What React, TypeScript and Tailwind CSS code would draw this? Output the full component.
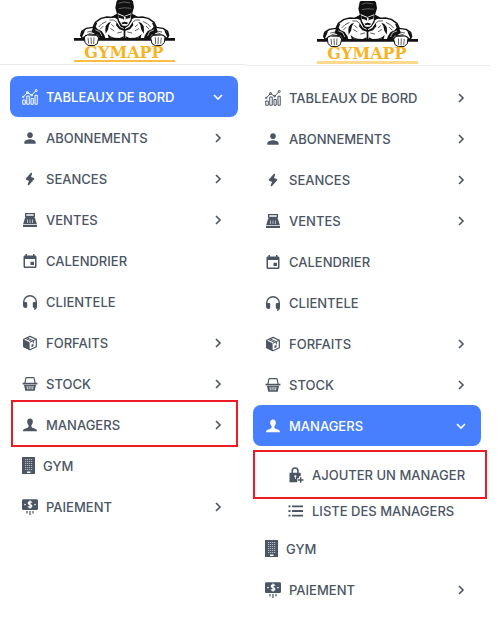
import type { ReactNode } from "react";

type Item = { label: string; icon: ReactNode; expandable?: boolean };

function Icon({ box = "0 0 16 16", narrow = false, children }: { box?: string; narrow?: boolean; children: ReactNode }) {
  return (
    <svg viewBox={box} aria-hidden="true" fill="currentColor" className={narrow ? "h-[17px] w-[13px] shrink-0" : "h-4 w-4 shrink-0"}>
      {children}
    </svg>
  );
}

const chartIcon = (
  <Icon box="0 0 32 32">
    <g fill="none" stroke="currentColor" strokeWidth="2">
      <path d="M1.500 22h5v8.500h-5zM9.500 14h5v16.500h-5zM18 19h4.500v11.500H18zM26 12.500h4.500v18H26z" />
      <path d="M3 15.500l8-8.500 8.500 5.500 8-9" />
      <circle cx="2.500" cy="16" r="1.500" />
      <circle cx="11" cy="7" r="2" />
      <circle cx="19.500" cy="12.500" r="1.500" />
      <circle cx="28.500" cy="3" r="2" />
    </g>
  </Icon>
);

const personIcon = (
  <Icon box="0 0 24 24">
    <path d="M12 12c2.400 0 4.300-1.900 4.300-4.300S14.400 3.400 12 3.400 7.700 5.300 7.700 7.700 9.600 12 12 12zm0 2c-3 0-8.500 1.500-8.500 4.500v2.200h17v-2.200c0-3-5.500-4.500-8.500-4.500z" />
  </Icon>
);

const boltIcon = (
  <Icon>
    <path d="M9.300 2.500L4.500 8l3.500 1.400L6.500 13.500l5-5.700L8 6.400z" stroke="currentColor" strokeWidth="1.600" strokeLinejoin="round" />
  </Icon>
);

const registerIcon = (
  <Icon>
    <path fillRule="evenodd" d="M3 1h10v4H12.500v1H13l1.800 6H1.200L3 6h.5V5H3zm1.300 1.200v1.600h7.400V2.200zM1 12.700h14V15H1z" />
    <path d="M5.500 7.500v3.500M8 7.500v3.500M10.500 7.500v3.500" stroke="white" strokeWidth=".6" />
  </Icon>
);

const calendarIcon = (
  <Icon>
    <path fillRule="evenodd" d="M3.500 1H5v1.500h6V1h1.500v1.500h.5c.900 0 1.500.600 1.500 1.500v9.500c0 .900-.600 1.500-1.500 1.500H3c-.900 0-1.500-.600-1.500-1.500V4c0-.900.600-1.500 1.500-1.500h.5zM3 6v7.500h10V6zM8.500 8.700H12V12H8.500z" />
  </Icon>
);

const headsetIcon = (
  <Icon>
    <path d="M1.700 10V8a6.300 6.300 0 0 1 12.600 0v4.500c0 1.500-.8 2.500-2.300 2.700" fill="none" stroke="currentColor" strokeWidth="1.400" />
    <path d="M1 9c0-.6.500-1 1-1h2c.7 0 1.200.5 1.200 1.200v3.600c0 .7-.5 1.200-1.200 1.200h-.5C2 14 1 13 1 11.500zM15 9c0-.6-.5-1-1-1h-2c-.7 0-1.200.5-1.200 1.200v3.600c0 .7.500 1.200 1.200 1.200h.5c1.500 0 2.500-1 2.500-2.500z" />
  </Icon>
);

const packageIcon = (
  <Icon>
    <path fill="none" stroke="currentColor" strokeWidth="1.200" strokeLinejoin="round" d="M8 1.400l6.300 2.800v7.600L8 14.800l-6.300-3V4.200z" />
    <path d="M1.200 4.300l6.400 2.900v7.700l-6.400-3.100z" />
    <path d="M8 7.200l6.300-3M5 2.800l6.300 2.900v2.600M3.500 3.500l6 2.800" fill="none" stroke="currentColor" />
    <path d="M9.500 9.800l2-1v2.400l-2 1z" />
  </Icon>
);

const basketIcon = (
  <Icon>
    <path d="M2.800 7.500l1-5c.1-.5.500-.8 1-.8h6.400c.5 0 .9.300 1 .8l1 5" fill="none" stroke="currentColor" strokeWidth="1.200" />
    <path d="M.6 6.800h14.800v1.700H.6zM2 9h12l-1.300 5.700H3.300z" />
    <path d="M5 9.800l.5 3.500M7.100 9.800v3.500M9 9.800v3.500M11 9.800l-.5 3.500" stroke="white" strokeWidth=".8" />
  </Icon>
);

const managerIcon = (
  <Icon>
    <path d="M8 1.400c-1.900 0-2.900 1.300-2.800 3.100 0 1.500.5 2.700 1.400 3.700.2 1.800-.3 2.200-1.600 2.700-2 .7-3.900.8-4 3.300h14c-.1-2.500-2-2.600-4-3.300-1.300-.5-1.800-.9-1.600-2.700.9-1 1.400-2.200 1.400-3.700.1-1.800-.9-3.100-2.800-3.100z" />
  </Icon>
);

const buildingIcon = (
  <Icon box="0 0 13 17" narrow>
    <path d="M0 0h13v17H0z" />
    <path d="M3 2.500h7.500M3 4.500h7.500M3 6.500h7.500M3 8.500h7.500M3 10.500h7.500M3 12.500h7.500" stroke="white" strokeOpacity=".75" strokeWidth=".8" strokeDasharray="1.200 .8" />
    <path d="M5 14.500h3.500V16H5z" fill="white" />
  </Icon>
);

const paymentIcon = (
  <Icon>
    <rect y=".300" width="16" height="10.700" rx="1.300" />
    <path d="M10 3.500C9.500 2.700 6.300 2.500 6.300 4.300c0 1.700 3.500.900 3.500 2.600 0 1.800-3.200 1.600-3.800.6M8 1.500v8" fill="none" stroke="white" strokeWidth="1.300" />
    <circle cx="3" cy="5.600" r=".8" fill="white" />
    <circle cx="13" cy="5.600" r=".8" fill="white" />
    <path d="M5 12v2.500M8 12v4M11 12v2.500" stroke="currentColor" strokeWidth="1.200" />
  </Icon>
);

const lockPlusIcon = (
  <Icon>
    <path d="M4.300 6.500V3.800a2.800 2.800 0 0 1 5.600 0v2.700" fill="none" stroke="currentColor" strokeWidth="1.600" />
    <path d="M1.500 5.800h11.200v3.400H11v2H9.300v4H1.500z" />
    <circle cx="7.300" cy="9.300" r="1.100" fill="white" />
    <path d="M7 10h.7v2H7z" fill="white" />
    <path d="M12.700 10.300v5.400M10 13h5.500" stroke="currentColor" strokeWidth="1.400" />
  </Icon>
);

const listIcon = (
  <Icon>
    <path d="M.5 2.500h2v1.800h-2zM.5 7.100h2v1.800h-2zM.5 11.700h2v1.800h-2zM4 2.500h11v1.800H4zM4 7.100h11v1.800H4zM4 11.700h11v1.800H4z" />
  </Icon>
);

const mainItems: Item[] = [
  { label: "TABLEAUX DE BORD", icon: chartIcon, expandable: true },
  { label: "ABONNEMENTS", icon: personIcon, expandable: true },
  { label: "SEANCES", icon: boltIcon, expandable: true },
  { label: "VENTES", icon: registerIcon, expandable: true },
  { label: "CALENDRIER", icon: calendarIcon },
  { label: "CLIENTELE", icon: headsetIcon },
  { label: "FORFAITS", icon: packageIcon, expandable: true },
  { label: "STOCK", icon: basketIcon, expandable: true },
  { label: "MANAGERS", icon: managerIcon, expandable: true },
];

const lastItems: Item[] = [
  { label: "GYM", icon: buildingIcon },
  { label: "PAIEMENT", icon: paymentIcon, expandable: true },
];

function Chevron({ open }: { open: boolean }) {
  return (
    <svg viewBox="0 0 16 16" aria-hidden="true" fill="none" stroke="currentColor" strokeWidth="1.600" className="ml-auto h-4 w-4 shrink-0">
      <path d={open ? "M4 6l4 4 4-4" : "M6 4l4 4-4 4"} />
    </svg>
  );
}

function Row({ item, active = false, framed = false }: { item: Item; active?: boolean; framed?: boolean }) {
  const tone = active ? "bg-[#487fff] text-white" : "text-[#4b5563]";
  const layout = "flex h-[41px] w-full items-center gap-2 rounded-lg px-3 text-left";
  return (
    <li className="relative">
      {item.expandable ? (
        <button type="button" aria-expanded={active} className={`${layout} ${tone}`}>
          {item.icon}
          <span>{item.label}</span>
          <Chevron open={active} />
        </button>
      ) : (
        <a href="#" className={`${layout} ${tone}`}>
          {item.icon}
          <span>{item.label}</span>
        </a>
      )}
      {framed && <span className="pointer-events-none absolute -top-1 right-0 -bottom-0.5 left-px border-2 border-[#ed1c24]" />}
    </li>
  );
}

function SubLink({ label, icon }: { label: string; icon: ReactNode }) {
  return (
    <a href="#" className="flex items-center gap-2 text-[#4b5563]">
      {icon}
      <span className="whitespace-nowrap">{label}</span>
    </a>
  );
}

/* One side of the athlete: drawn once, then mirrored around the middle of the chest. */
function HalfBody() {
  return (
    <g strokeLinejoin="round" strokeLinecap="round">
      <path
        fill="white"
        stroke="#111"
        strokeWidth="4"
        d="M192 118H118L106 104 76 106 64 116 59 106 62 94 76 85 96 82 103 67 120 55 138 51 154 52 168 44 192 40z"
      />
      <g fill="#111">
        <path d="M150 51l18-8 6 18-10-6z" />
        <path d="M96 82l8-14 5 0-5 12 6 8 12 5 8 12 4 12H118l-8-13-10-3-8-6z" />
        <path d="M59 106l3-10 10-7-2 8-5 10-3 8z" />
        <path d="M134 78l8-10 8-2-6 9-3 14-7 12-1-11z" />
        <path d="M140 102l8 7 12 4 16 1 12-5v9h-44z" />
        <path d="M167 66l10 15 14 7v5l-16-5-10-12z" />
      </g>
      <g fill="none" stroke="#111" strokeWidth="2">
        <path d="M114 80l9-9 12-6M118 87l8-8M146 60l12 0 8 6M152 74l7 6M149 86l10 6M170 99l12-3M80 96l14-3M84 101l12-3" />
      </g>
      <g fill="none" stroke="white" strokeWidth="2">
        <path d="M104 90l12 5 6 12M150 114l10 2M168 116l12-1" />
      </g>
    </g>
  );
}

function Fist() {
  return (
    <g stroke="#111" strokeWidth="3" strokeLinejoin="round">
      <path fill="white" d="M70 110l9-5 27 1 7 8-4 17-10 6-18-1-9-8z" />
      <path fill="none" d="M81 113l2 18M90 112l1 21M99 112l-1 20" strokeWidth="2" />
    </g>
  );
}

function Logo({ underline }: { underline: string }) {
  return (
    <div className="flex h-16 flex-col items-center">
      <svg viewBox="39 0 303 138" role="img" aria-label="Athlete" className="h-[46px] w-[101px] shrink-0">
        <HalfBody />
        <g transform="matrix(-1 0 0 1 382 0)">
          <HalfBody />
        </g>
        <path d="M191 87v29" stroke="#111" strokeWidth="4" />
        <path fill="#111" d="M39 114h303v8H39z" />
        <Fist />
        <g transform="matrix(-1 0 0 1 382 0)">
          <Fist />
        </g>
        <path fill="#111" d="M167 39l-4-16 4-20 9-8h31l9 9 3 18-5 17-2 24-10 15-11 7-12-5-9-17z" />
        <path fill="white" d="M170 39l8 4 12 5 21-8-2 19-7 14-9 9-10-6-9-15z" />
        <path fill="#111" d="M171 43l18 7 21-7-2 10-13 4-4 9-4-9-14-4zM181 68l10-3 11 3-5 5-6-2-6 2zM184 77h15l-7 7z" />
        <path fill="none" stroke="white" strokeWidth="1" d="M173 10q14-8 34-1M173 26q17-5 37-1" />
        <path fill="white" d="M189 51h5v13h-5z" />
      </svg>
      <div className="-mt-1 font-['DejaVu_Serif',serif] text-[16px] leading-[21px] font-bold text-[#f8b323]">GYMAPP</div>
      <div className={`-mt-[3px] w-[101px] ${underline}`} />
    </div>
  );
}

export default function App() {
  return (
    <main className="grid grid-cols-[247fr_243fr] bg-white pr-2.5 font-['Inter',sans-serif] text-[13px] leading-5 font-medium">
      <section>
        <header className="border-b border-[#e8eaed] pr-[9px] pl-2.5">
          <Logo underline="h-0.5 bg-[#fbbd43]" />
        </header>
        <nav aria-label="Menu" className="pt-[11px] pr-[9px] pl-2.5">
          <ul>
            {mainItems.map((item, index) => (
              <Row key={item.label} item={item} active={index === 0} framed={item.label === "MANAGERS"} />
            ))}
            {lastItems.map((item) => (
              <Row key={item.label} item={item} />
            ))}
          </ul>
        </nav>
      </section>

      <section className="pt-px">
        <header className="border-b border-[#e8eaed] pr-[9px] pl-1.5">
          <Logo underline="h-[3px] bg-[#fdd98d]" />
        </header>
        <nav aria-label="Menu managers" className="pt-[11px] pr-[9px] pl-1.5">
          <ul>
            {mainItems.map((item) => (
              <Row key={item.label} item={item} active={item.label === "MANAGERS"} />
            ))}
            <li className="mt-1 mb-1.5">
              <ul>
                <li className="-mr-1.5 flex h-[49px] items-center border-2 border-[#ed1c24] pl-[33px]">
                  <SubLink label="AJOUTER UN MANAGER" icon={lockPlusIcon} />
                </li>
                <li className="flex h-[23px] items-center pl-[35px]">
                  <SubLink label="LISTE DES MANAGERS" icon={listIcon} />
                </li>
              </ul>
            </li>
            {lastItems.map((item) => (
              <Row key={item.label} item={item} />
            ))}
          </ul>
        </nav>
      </section>
    </main>
  );
}
